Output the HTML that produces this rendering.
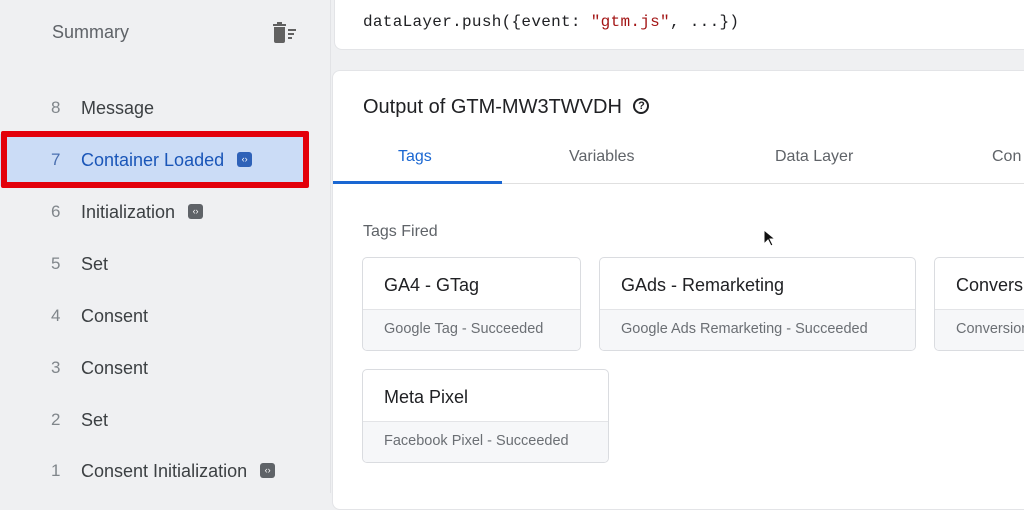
<!DOCTYPE html>
<html><head><meta charset="utf-8"><style>
*{margin:0;padding:0;box-sizing:border-box}
body{width:1024px;height:493px;overflow:hidden;background:#eff0f2;font-family:"Liberation Sans",Roboto,sans-serif;position:relative}
.side{position:absolute;left:0;top:0;width:331px;height:493px;background:#eff0f2;border-right:1px solid #e2e3e6}
.sum{position:absolute;left:52px;top:22px;font-size:18px;color:#5f6368}
.item{position:absolute;left:0;width:308px;height:52px;font-size:18px;color:#3c4043}
.item .n{position:absolute;left:51px;top:0;line-height:52px;color:#80868b;font-size:17px}
.item .l{position:absolute;left:81px;top:0;line-height:52px}
.ic{display:inline-block;width:15px;height:15px;border-radius:3px;background:#5f6368;vertical-align:middle;margin-left:13px;color:#fff;font-size:9px;line-height:15px;text-align:center;position:relative;top:-2px}
.card{position:absolute;background:#fff;border-radius:8px;border:1px solid #e3e4e7}
.code{font-family:"Liberation Mono",monospace;font-size:16px;color:#202124;position:absolute;left:363px;top:13px;letter-spacing:0.3px}
.tag{position:absolute;background:#fff;border:1px solid #dadce0;border-radius:5px;overflow:hidden}
.tag .h{height:52px;line-height:54px;padding-left:21px;font-size:18px;color:#202124;border-bottom:1px solid #e3e4e7}
.tag .f{height:40px;line-height:38px;padding-left:21px;font-size:14.5px;color:#6b6f74;background:#f6f7f9}
.tab{position:absolute;top:148px;font-size:16px;color:#5f6368}
</style></head><body>
<div class="side">
<div class="sum">Summary</div>
<svg style="position:absolute;left:271px;top:22px" width="28" height="22" viewBox="0 0 28 22"><rect x="2" y="2" width="13" height="2" fill="#616161"/><rect x="6" y="0" width="5" height="2" fill="#616161"/><path d="M3 5h11v14a2 2 0 0 1-2 2H5a2 2 0 0 1-2-2z" fill="#616161"/><rect x="17" y="7" width="8" height="2" fill="#616161"/><rect x="17" y="11" width="6" height="2" fill="#616161"/><rect x="17" y="15" width="4" height="2" fill="#616161"/></svg>
<div class="item" style="top:82px"><span class="n">8</span><span class="l">Message</span></div>
<div class="item" style="top:134px;background:#cbdcf6;color:#1a56b8"><span class="n" style="color:#4a6fb0">7</span><span class="l">Container Loaded<span class="ic" style="background:#2f62b8">‹›</span></span></div>
<div style="position:absolute;left:1px;top:131px;width:308px;height:57px;border:6px solid #e3000b;border-radius:2px"></div>
<div class="item" style="top:186px"><span class="n">6</span><span class="l">Initialization<span class="ic">‹›</span></span></div>
<div class="item" style="top:238px"><span class="n">5</span><span class="l">Set</span></div>
<div class="item" style="top:290px"><span class="n">4</span><span class="l">Consent</span></div>
<div class="item" style="top:342px"><span class="n">3</span><span class="l">Consent</span></div>
<div class="item" style="top:394px"><span class="n">2</span><span class="l">Set</span></div>
<div class="item" style="top:445px"><span class="n">1</span><span class="l">Consent Initialization<span class="ic">‹›</span></span></div>
</div>
<div class="card" style="left:334px;top:-10px;width:700px;height:60px"></div>
<div class="code">dataLayer.push({event: <span style="color:#a31515">"gtm.js"</span>, ...})</div>
<div class="card" style="left:332px;top:70px;width:700px;height:440px"></div>
<div style="position:absolute;left:363px;top:96px;font-size:20px;color:#202124">Output of GTM-MW3TWVDH <span style="display:inline-block;width:16px;height:16px;border:2px solid #202124;border-radius:50%;font-size:11px;line-height:12px;text-align:center;font-weight:bold;vertical-align:middle;margin-left:6px;position:relative;top:-2px">?</span></div>
<div class="tab" style="left:398px;color:#1a67d2">Tags</div>
<div class="tab" style="left:569px">Variables</div>
<div class="tab" style="left:775px">Data Layer</div>
<div class="tab" style="left:992px">Con</div>
<div style="position:absolute;left:333px;top:183px;width:691px;height:1px;background:#e0e0e0"></div>
<div style="position:absolute;left:333px;top:181px;width:169px;height:3px;background:#1a67d2"></div>
<div style="position:absolute;left:363px;top:223px;font-size:16px;color:#5f6368">Tags Fired</div>
<svg style="position:absolute;left:763px;top:229px" width="12" height="18" viewBox="0 0 12 18"><path d="M1 1v14l4-4 3 6 2-1-3-6h5z" fill="#111" stroke="#fff" stroke-width="1"/></svg>
<div class="tag" style="left:362px;top:257px;width:219px"><div class="h">GA4 - GTag</div><div class="f">Google Tag - Succeeded</div></div>
<div class="tag" style="left:599px;top:257px;width:317px"><div class="h">GAds - Remarketing</div><div class="f">Google Ads Remarketing - Succeeded</div></div>
<div class="tag" style="left:934px;top:257px;width:120px"><div class="h">Conversion</div><div class="f">Conversion Linker</div></div>
<div class="tag" style="left:362px;top:369px;width:247px"><div class="h">Meta Pixel</div><div class="f">Facebook Pixel - Succeeded</div></div>
</body></html>
